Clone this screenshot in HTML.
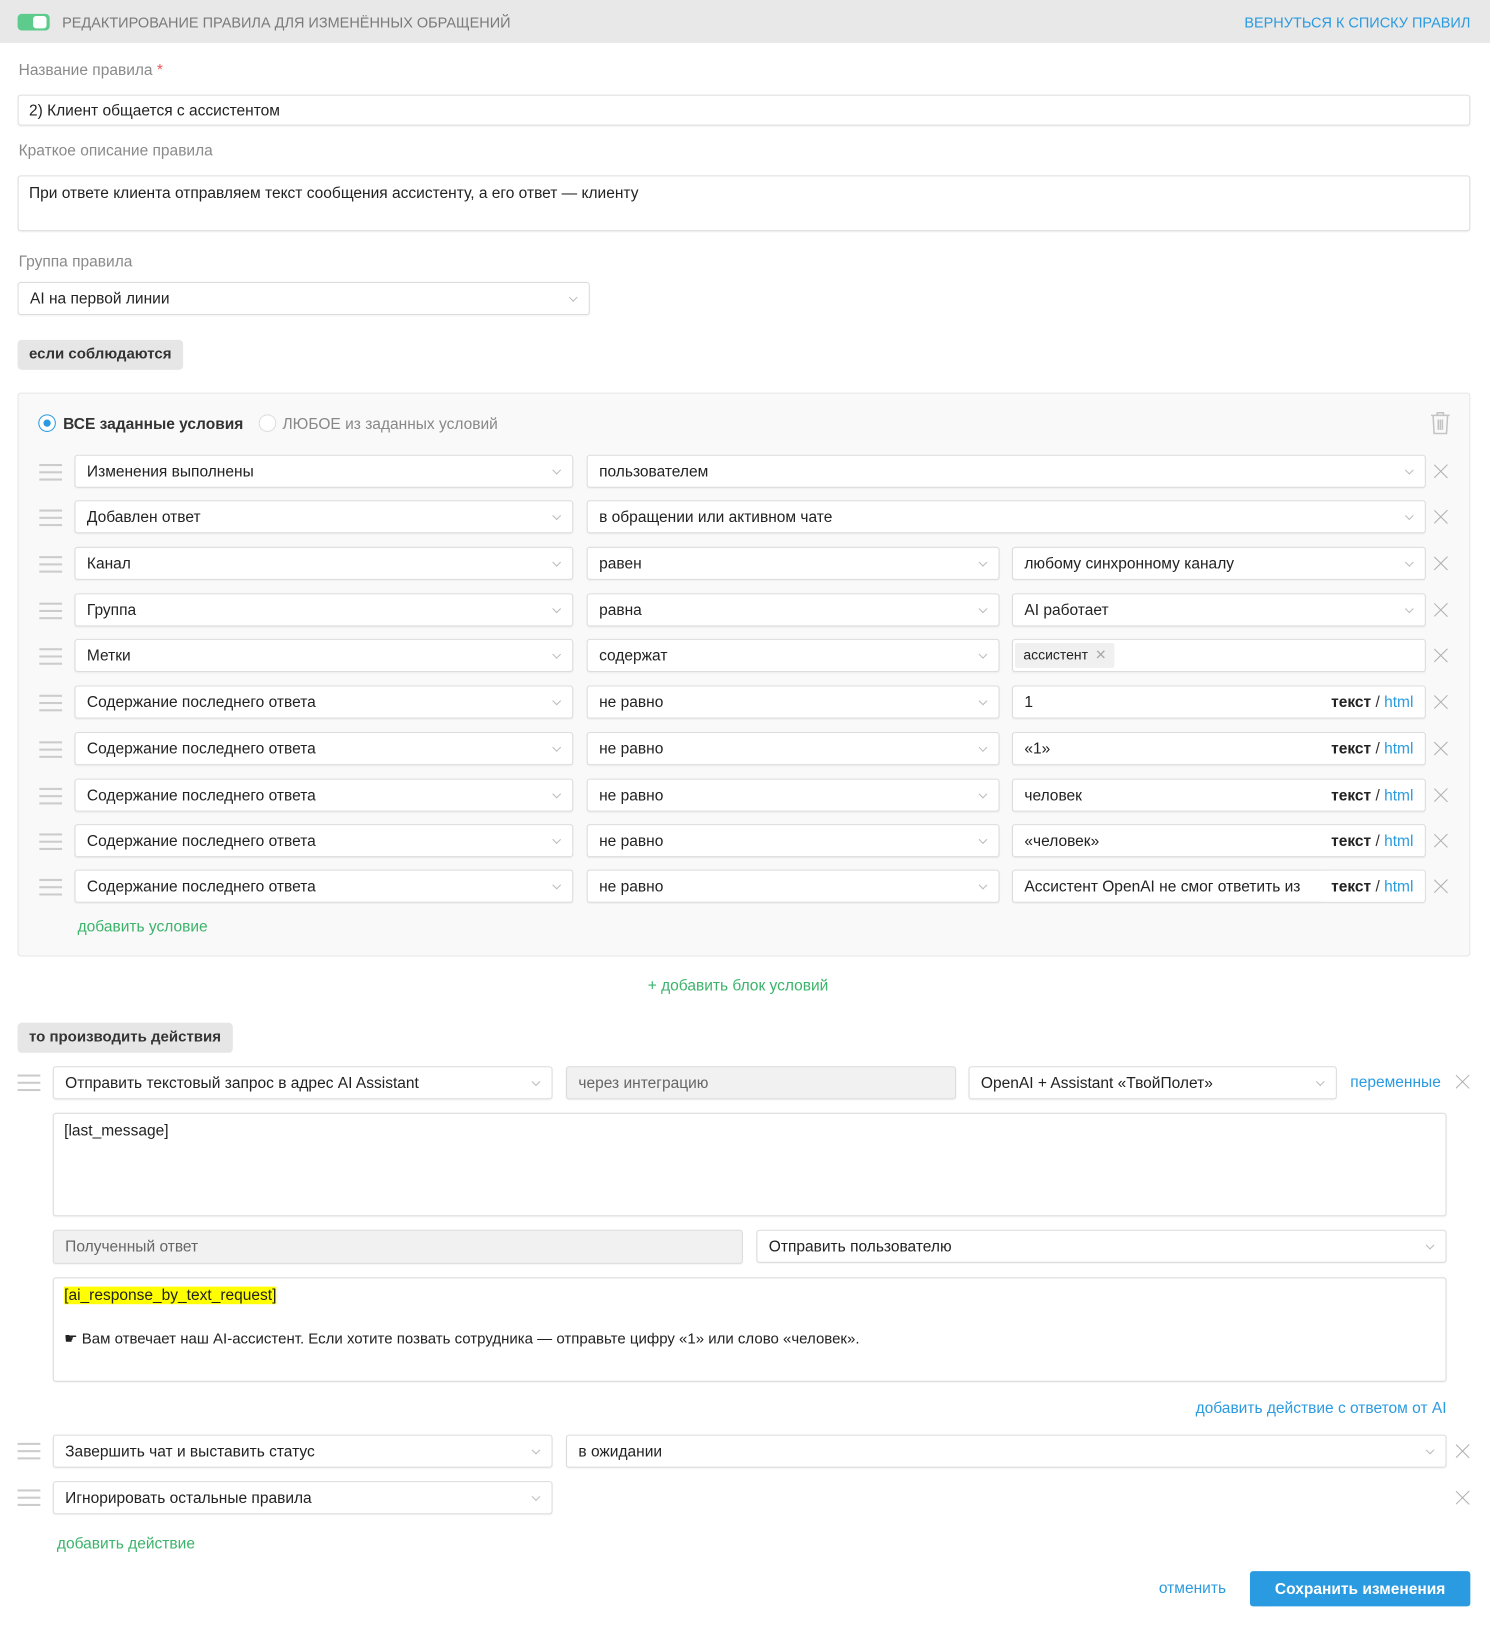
<!DOCTYPE html>
<html><head><meta charset="utf-8"><style>
*{box-sizing:border-box;margin:0;padding:0}
html,body{width:1490px;height:1624px;overflow:hidden;background:#fff}
#w{position:absolute;left:0;top:0;width:1440px;height:1570px;transform:translateY(1.5px) scale(1.03472);transform-origin:0 0;font-family:"Liberation Sans",Arial,sans-serif;font-size:15px;color:#222}
.a{position:absolute}
.lbl{position:absolute;color:#8a8a8a;font-size:15px}
.f{position:absolute;height:32px;border:1px solid #dcdcdc;border-radius:3px;background:#fff;padding:0 11px;line-height:31px;white-space:nowrap;overflow:hidden;box-shadow:0 1px 1px rgba(0,0,0,.04)}
.g{background:#f1f1f1;color:#666}
.s::after{content:"";position:absolute;right:12px;top:11px;width:5px;height:5px;border-right:1px solid #bbb;border-bottom:1px solid #bbb;transform:rotate(45deg)}
.h{position:absolute;width:22px;height:16px;border-top:2px solid #ccc;border-bottom:2px solid #ccc}
.h::after{content:"";position:absolute;left:0;right:0;top:5px;border-top:2px solid #ccc}
.x{position:absolute;width:14px;height:14px}
.x::before,.x::after{content:"";position:absolute;left:6px;top:-2px;width:1.3px;height:18px;background:#b0b0b0;transform:rotate(45deg)}
.x::after{transform:rotate(-45deg)}
.pill{position:absolute;height:29px;background:#e6e6e6;border-radius:4px;font-weight:bold;padding:0 11px;line-height:29px;color:#333;font-size:14.5px}
.th{position:absolute;right:11px;top:0;font-weight:bold}
.th span{font-weight:normal;color:#2a9be0}
.th i{font-style:normal;font-weight:normal;color:#333}
.grn{color:#3bb36b}
.blu{color:#2a9be0}
</style></head><body><div id="w">
<div class="a" style="left:0;top:-2px;width:1440px;height:42px;background:#e8e8e8"></div>
<div class="a" style="left:17px;top:12px;width:31px;height:16px;border-radius:4px;background:#5ccb8c"></div>
<div class="a" style="left:32px;top:14px;width:13px;height:12px;border-radius:3px;background:#fff"></div>
<div class="a" style="left:60px;top:12px;color:#7a7a7a;font-size:14px">РЕДАКТИРОВАНИЕ ПРАВИЛА ДЛЯ ИЗМЕНЁННЫХ ОБРАЩЕНИЙ</div>
<div class="a blu" style="right:19px;top:12px;font-size:14px">ВЕРНУТЬСЯ К СПИСКУ ПРАВИЛ</div>

<div class="lbl" style="left:18px;top:58px">Название правила <span style="color:#e55">*</span></div>
<div class="f" style="left:17px;top:90px;width:1404px;height:30px;line-height:29px;padding-left:10px">2) Клиент общается с ассистентом</div>
<div class="lbl" style="left:18px;top:136px">Краткое описание правила</div>
<div class="f" style="left:17px;top:168px;width:1404px;height:54px;line-height:33px;padding-left:10px">При ответе клиента отправляем текст сообщения ассистенту, а его ответ — клиенту</div>
<div class="lbl" style="left:18px;top:243px">Группа правила</div>
<div class="f s" style="left:17px;top:271px;width:553px">AI на первой линии</div>
<div class="pill" style="left:17px;top:327px">если соблюдаются</div>

<div class="a" style="left:17px;top:378px;width:1404px;height:545px;background:#f9f9f9;border:1px solid #e6e6e6;border-radius:3px"></div>
<div class="a" style="left:37px;top:399px;width:17px;height:17px;border:1px solid #2a9be0;border-radius:50%;background:#fff"></div>
<div class="a" style="left:42px;top:404px;width:7px;height:7px;border-radius:50%;background:#2a9be0"></div>
<div class="a" style="left:61px;top:400px;font-weight:bold;color:#333">ВСЕ заданные условия</div>
<div class="a" style="left:250px;top:399px;width:17px;height:17px;border:1px solid #ddd;border-radius:50%;background:#fff"></div>
<div class="a" style="left:273px;top:400px;color:#888">ЛЮБОЕ из заданных условий</div>
<svg class="a" style="left:1382px;top:396px" width="20" height="23" viewBox="0 0 20 23"><path d="M1 4h18M7 4V1.5h6V4M3 4l1 17.5h12L17 4M8 8v10M10 8v10M12 8v10" fill="none" stroke="#c4c4c4" stroke-width="1.5"/></svg>

<div class="h" style="left:38px;top:447px"></div><div class="f s" style="left:72px;top:438px;width:482px">Изменения выполнены</div><div class="f s" style="left:567px;top:438px;width:811px">пользователем</div><div class="x" style="left:1386px;top:447px"></div>
<div class="h" style="left:38px;top:491px"></div><div class="f s" style="left:72px;top:482px;width:482px">Добавлен ответ</div><div class="f s" style="left:567px;top:482px;width:811px">в обращении или активном чате</div><div class="x" style="left:1386px;top:491px"></div>
<div class="h" style="left:38px;top:536px"></div><div class="f s" style="left:72px;top:527px;width:482px">Канал</div><div class="f s" style="left:567px;top:527px;width:399px">равен</div><div class="f s" style="left:978px;top:527px;width:400px">любому синхронному каналу</div><div class="x" style="left:1386px;top:536px"></div>
<div class="h" style="left:38px;top:581px"></div><div class="f s" style="left:72px;top:572px;width:482px">Группа</div><div class="f s" style="left:567px;top:572px;width:399px">равна</div><div class="f s" style="left:978px;top:572px;width:400px">AI работает</div><div class="x" style="left:1386px;top:581px"></div>
<div class="h" style="left:38px;top:625px"></div><div class="f s" style="left:72px;top:616px;width:482px">Метки</div><div class="f s" style="left:567px;top:616px;width:399px">содержат</div><div class="f" style="left:978px;top:616px;width:400px;padding:0"><span style="position:absolute;left:2px;top:3px;height:24px;line-height:24px;background:#f0f0f0;border-radius:2px;padding:0 26px 0 8px;font-size:13.5px">ассистент<span style="position:absolute;right:8px;color:#aaa">✕</span></span></div><div class="x" style="left:1386px;top:625px"></div>
<div class="h" style="left:38px;top:670px"></div><div class="f s" style="left:72px;top:661px;width:482px">Содержание последнего ответа</div><div class="f s" style="left:567px;top:661px;width:399px">не равно</div><div class="f" style="left:978px;top:661px;width:400px">1<span class="th">текст <i>/</i> <span>html</span></span></div><div class="x" style="left:1386px;top:670px"></div>
<div class="h" style="left:38px;top:715px"></div><div class="f s" style="left:72px;top:706px;width:482px">Содержание последнего ответа</div><div class="f s" style="left:567px;top:706px;width:399px">не равно</div><div class="f" style="left:978px;top:706px;width:400px">«1»<span class="th">текст <i>/</i> <span>html</span></span></div><div class="x" style="left:1386px;top:715px"></div>
<div class="h" style="left:38px;top:760px"></div><div class="f s" style="left:72px;top:751px;width:482px">Содержание последнего ответа</div><div class="f s" style="left:567px;top:751px;width:399px">не равно</div><div class="f" style="left:978px;top:751px;width:400px">человек<span class="th">текст <i>/</i> <span>html</span></span></div><div class="x" style="left:1386px;top:760px"></div>
<div class="h" style="left:38px;top:804px"></div><div class="f s" style="left:72px;top:795px;width:482px">Содержание последнего ответа</div><div class="f s" style="left:567px;top:795px;width:399px">не равно</div><div class="f" style="left:978px;top:795px;width:400px">«человек»<span class="th">текст <i>/</i> <span>html</span></span></div><div class="x" style="left:1386px;top:804px"></div>
<div class="h" style="left:38px;top:848px"></div><div class="f s" style="left:72px;top:839px;width:482px">Содержание последнего ответа</div><div class="f s" style="left:567px;top:839px;width:399px">не равно</div><div class="f" style="left:978px;top:839px;width:400px">Ассистент OpenAI не смог ответить из<span class="th" style="background:#fff;padding-left:6px;right:0;padding-right:11px">текст <i>/</i> <span>html</span></span></div><div class="x" style="left:1386px;top:848px"></div>
<div class="a grn" style="left:75px;top:886px">добавить условие</div>
<div class="a grn" style="left:626px;top:943px">+ добавить блок условий</div>

<div class="pill" style="left:17px;top:987px">то производить действия</div>
<div class="h" style="left:17px;top:1037px"></div>
<div class="f s" style="left:51px;top:1029px;width:483px">Отправить текстовый запрос в адрес AI Assistant</div>
<div class="f g" style="left:547px;top:1029px;width:377px">через интеграцию</div>
<div class="f s" style="left:936px;top:1029px;width:356px">OpenAI + Assistant «ТвойПолет»</div>
<div class="a blu" style="left:1305px;top:1036px">переменные</div>
<div class="x" style="left:1407px;top:1037px"></div>
<div class="f" style="left:51px;top:1074px;width:1347px;height:100px;line-height:33px;padding-left:10px">[last_message]</div>
<div class="f g" style="left:51px;top:1187px;width:667px;height:33px">Полученный ответ</div>
<div class="f s" style="left:731px;top:1187px;width:667px">Отправить пользователю</div>
<div class="f" style="left:51px;top:1233px;width:1347px;height:101px;padding-left:10px;line-height:21px;padding-top:6px"><span style="background:#ffff00">[ai_response_by_text_request]</span><br><br><span style="font-size:14.5px">☛ Вам отвечает наш AI-ассистент. Если хотите позвать сотрудника — отправьте цифру «1» или слово «человек».</span></div>
<div class="a blu" style="right:42px;top:1351px">добавить действие с ответом от AI</div>
<div class="h" style="left:17px;top:1393px"></div>
<div class="f s" style="left:51px;top:1385px;width:483px">Завершить чат и выставить статус</div>
<div class="f s" style="left:547px;top:1385px;width:851px">в ожидании</div>
<div class="x" style="left:1407px;top:1394px"></div>
<div class="h" style="left:17px;top:1438px"></div>
<div class="f s" style="left:51px;top:1430px;width:483px">Игнорировать остальные правила</div>
<div class="x" style="left:1407px;top:1439px"></div>
<div class="a grn" style="left:55px;top:1482px">добавить действие</div>
<div class="a blu" style="left:1120px;top:1525px">отменить</div>
<div class="a" style="left:1208px;top:1517px;width:213px;height:34px;background:#2a9be0;border-radius:3px;color:#fff;font-weight:bold;text-align:center;line-height:35px">Сохранить изменения</div>
</div></body></html>
